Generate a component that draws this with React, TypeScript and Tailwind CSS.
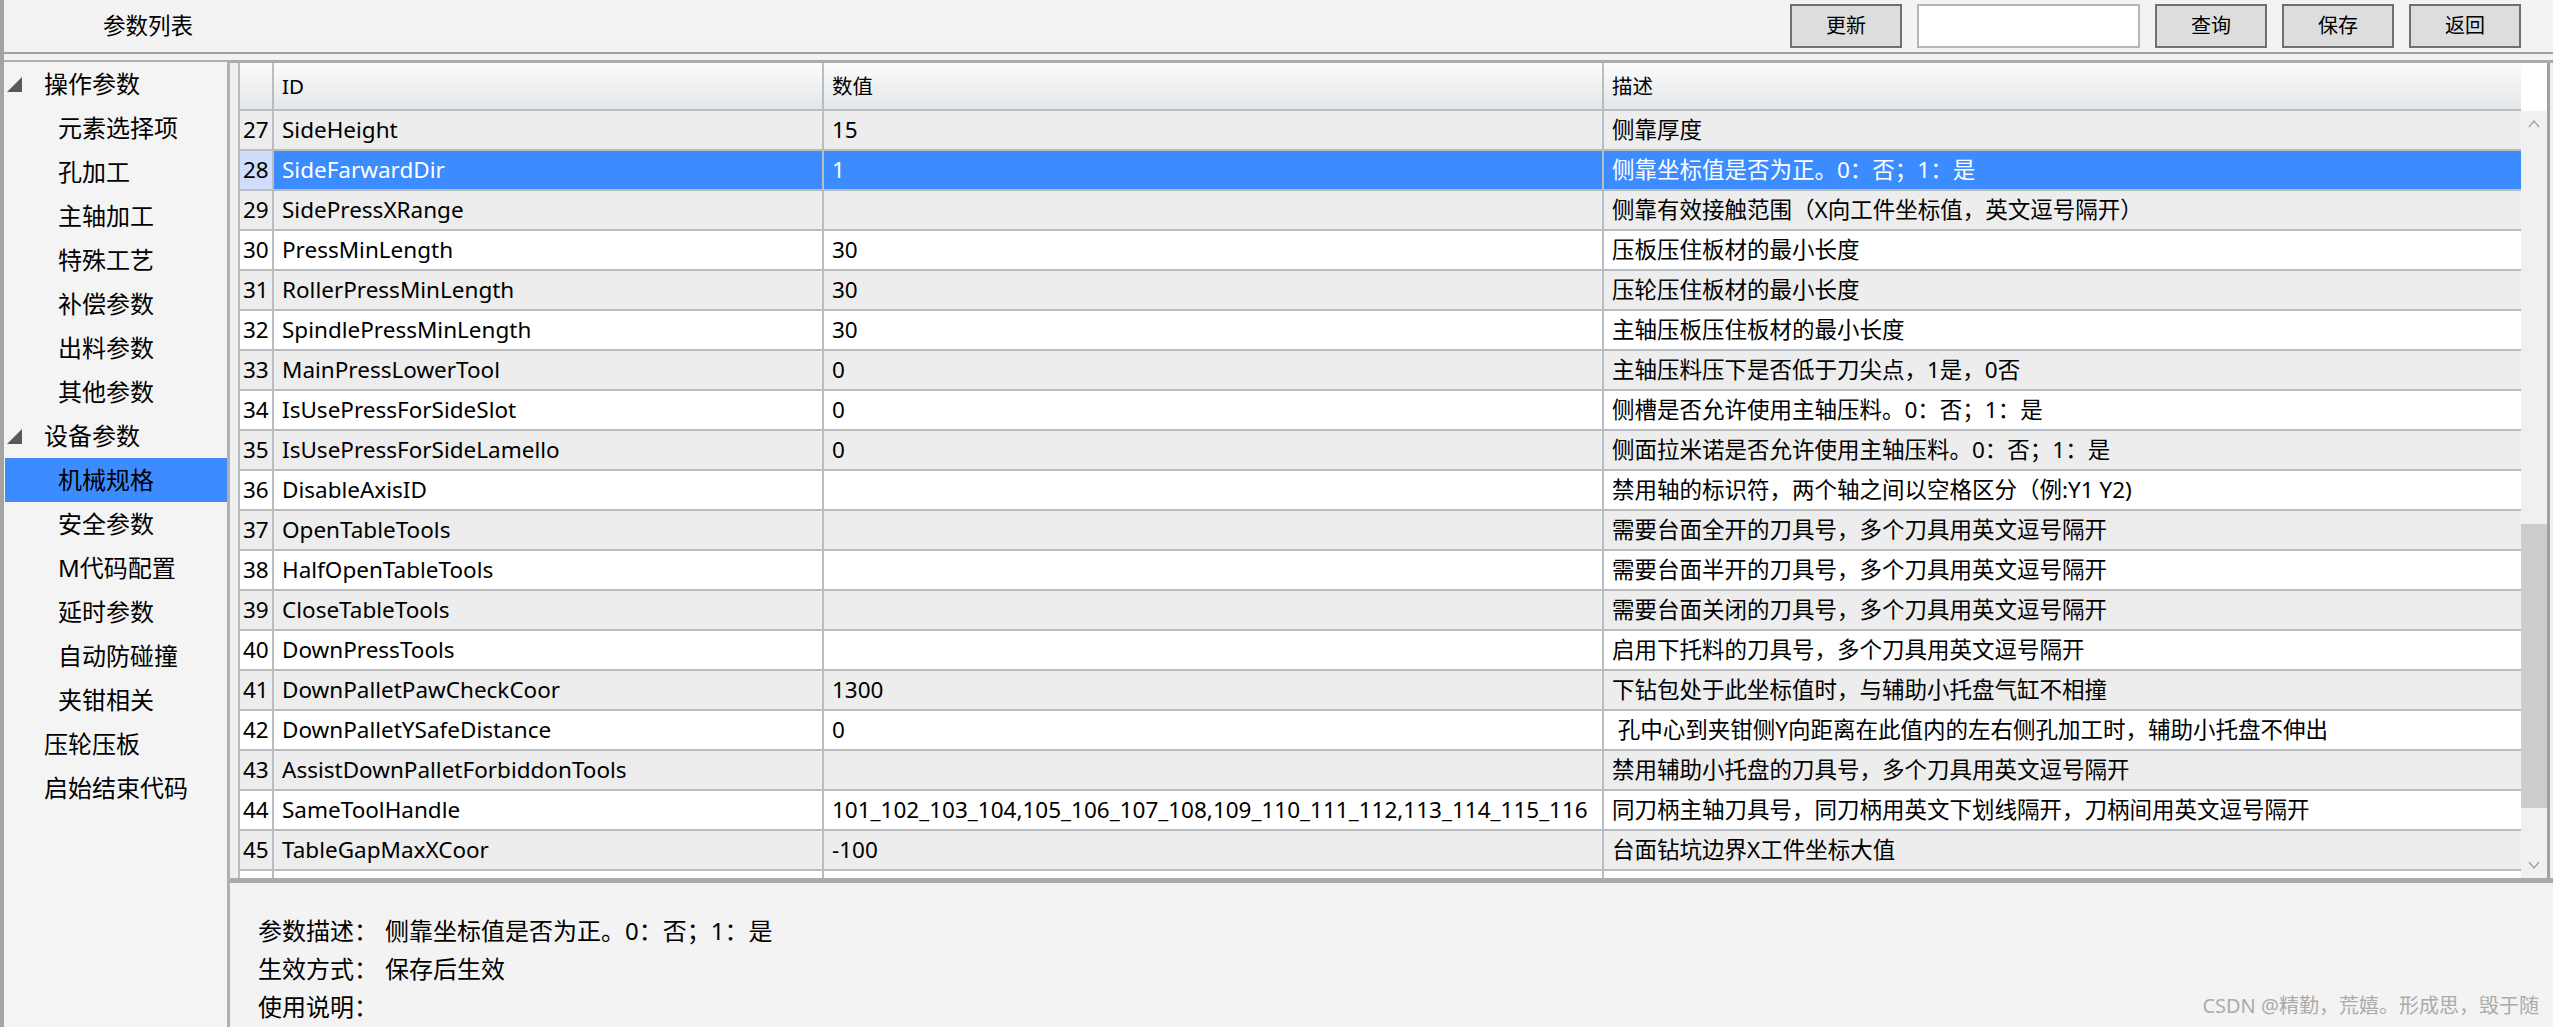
const tree = [
  { label: "操作参数", level: 0, open: true },
  { label: "元素选择项", level: 1 },
  { label: "孔加工", level: 1 },
  { label: "主轴加工", level: 1 },
  { label: "特殊工艺", level: 1 },
  { label: "补偿参数", level: 1 },
  { label: "出料参数", level: 1 },
  { label: "其他参数", level: 1 },
  { label: "设备参数", level: 0, open: true },
  { label: "机械规格", level: 1, selected: true },
  { label: "安全参数", level: 1 },
  { label: "M代码配置", level: 1 },
  { label: "延时参数", level: 1 },
  { label: "自动防碰撞", level: 1 },
  { label: "夹钳相关", level: 1 },
  { label: "压轮压板", level: 0 },
  { label: "启始结束代码", level: 0 },
];

const rows: [number, string, string, string][] = [
  [27, "SideHeight", "15", "侧靠厚度"],
  [28, "SideFarwardDir", "1", "侧靠坐标值是否为正。0：否；1：是"],
  [29, "SidePressXRange", "", "侧靠有效接触范围（X向工件坐标值，英文逗号隔开）"],
  [30, "PressMinLength", "30", "压板压住板材的最小长度"],
  [31, "RollerPressMinLength", "30", "压轮压住板材的最小长度"],
  [32, "SpindlePressMinLength", "30", "主轴压板压住板材的最小长度"],
  [33, "MainPressLowerTool", "0", "主轴压料压下是否低于刀尖点，1是，0否"],
  [34, "IsUsePressForSideSlot", "0", "侧槽是否允许使用主轴压料。0：否；1：是"],
  [35, "IsUsePressForSideLamello", "0", "侧面拉米诺是否允许使用主轴压料。0：否；1：是"],
  [36, "DisableAxisID", "", "禁用轴的标识符，两个轴之间以空格区分（例:Y1 Y2)"],
  [37, "OpenTableTools", "", "需要台面全开的刀具号，多个刀具用英文逗号隔开"],
  [38, "HalfOpenTableTools", "", "需要台面半开的刀具号，多个刀具用英文逗号隔开"],
  [39, "CloseTableTools", "", "需要台面关闭的刀具号，多个刀具用英文逗号隔开"],
  [40, "DownPressTools", "", "启用下托料的刀具号，多个刀具用英文逗号隔开"],
  [41, "DownPalletPawCheckCoor", "1300", "下钻包处于此坐标值时，与辅助小托盘气缸不相撞"],
  [42, "DownPalletYSafeDistance", "0", " 孔中心到夹钳侧Y向距离在此值内的左右侧孔加工时，辅助小托盘不伸出"],
  [43, "AssistDownPalletForbiddonTools", "", "禁用辅助小托盘的刀具号，多个刀具用英文逗号隔开"],
  [44, "SameToolHandle", "101_102_103_104,105_106_107_108,109_110_111_112,113_114_115_116", "同刀柄主轴刀具号，同刀柄用英文下划线隔开，刀柄间用英文逗号隔开"],
  [45, "TableGapMaxXCoor", "-100", "台面钻坑边界X工件坐标大值"],
];

function Btn({ children }: { children: string }) {
  return (
    <button className="w-[112px] h-[44px] bg-[#dddddd] border-2 border-[#707070] text-[20px] text-black">
      {children}
    </button>
  );
}

function Triangle() {
  return (
    <svg width="16" height="16" viewBox="0 0 16 16" className="shrink-0">
      <polygon points="15,1 15,16 0,16" fill="#595959" />
    </svg>
  );
}

function Chevron({ up }: { up?: boolean }) {
  return (
    <svg width="12" height="8" viewBox="0 0 12 8">
      <polyline
        points={up ? "1,7 6,1 11,7" : "1,1 6,7 11,1"}
        fill="none"
        stroke="#a0a0a0"
        strokeWidth="1.3"
      />
    </svg>
  );
}

export default function App() {
  return (
    <div className="w-[2553px] h-[1027px] overflow-hidden flex flex-col bg-[#f3f3f3] border-l-4 border-[#a3a3a3] text-black font-['Noto_Sans','Noto_Sans_CJK_SC',sans-serif]">
      {/* top bar */}
      <div className="h-[54px] shrink-0 flex items-center border-b-2 border-[#9ea2a8] pl-[99px] pr-[32px]">
        <span className="text-[22.5px]">参数列表</span>
        <div className="ml-auto flex items-center gap-[15px]">
          <Btn>更新</Btn>
          <input className="w-[223px] h-[44px] bg-white border-2 border-[#b4b6bb] outline-none" />
          <Btn>查询</Btn>
          <Btn>保存</Btn>
          <Btn>返回</Btn>
        </div>
      </div>

      <div className="flex-1 flex pt-[6px] min-h-0">
        {/* tree */}
        <div className="w-[226px] shrink-0 bg-[#f4f4f4] border-t-2 border-r-[3px] border-[#b0b0b0] text-[24px] pl-[1px]">
          {tree.map((t) => (
            <div
              key={t.label}
              className={
                "h-[44px] w-[222px] flex items-center " +
                (t.selected ? "bg-[#3c8cff]" : "")
              }
            >
              {t.level === 0 ? (
                <>
                  <div className="w-[39px] pl-[2px] flex items-center">
                    {t.open ? <Triangle /> : null}
                  </div>
                  <span>{t.label}</span>
                </>
              ) : (
                <span className="pl-[53px]">{t.label}</span>
              )}
            </div>
          ))}
        </div>

        {/* right side */}
        <div className="flex-1 flex flex-col min-w-0">
          <div className="h-[823px] shrink-0 border-t-[3px] border-b-[5px] border-[#ababab] bg-[#f0f0f0] pl-[8px] pr-[3px]">
            <div className="h-full flex border-l-2 border-r-[3px] border-l-[#b8bcc0] border-r-[#a0a0a0]">
              <div className="w-[2281px] flex flex-col overflow-hidden">
                {/* header */}
                <div className="h-[48px] shrink-0 grid grid-cols-[34px_550px_780px_917px] border-b-2 border-[#b9bcc0] bg-linear-to-b from-[#fcfcfc] to-[#e3e5e8] text-[20.5px]">
                  <div className="border-r-2 border-[#b9bcc0]" />
                  <div className="border-r-2 border-[#b9bcc0] pl-[8px] flex items-center">ID</div>
                  <div className="border-r-2 border-[#b9bcc0] pl-[8px] flex items-center">数值</div>
                  <div className="pl-[8px] flex items-center">描述</div>
                </div>
                {rows.map(([n, id, val, desc]) => {
                  const sel = n === 28;
                  const bg = sel ? "bg-[#3c8cff] text-white" : n % 2 ? "bg-[#ededed]" : "bg-white";
                  return (
                    <div
                      key={n}
                      className="h-[40px] shrink-0 grid grid-cols-[34px_550px_780px_917px] border-b-2 border-[#b9bcc0] text-[22.5px]"
                    >
                      <div
                        className={
                          "border-r-2 border-[#b9bcc0] pl-[3px] flex items-center overflow-hidden " +
                          (sel ? "bg-[#cfdcfa]" : n % 2 ? "bg-[#ededed]" : "bg-white")
                        }
                      >
                        {n}
                      </div>
                      <div className={"border-r-2 border-[#b9bcc0] pl-[8px] flex items-center overflow-hidden whitespace-nowrap " + bg}>
                        {id}
                      </div>
                      <div className={"border-r-2 border-[#b9bcc0] pl-[8px] flex items-center overflow-hidden whitespace-nowrap " + bg}>
                        {val}
                      </div>
                      <div className={"pl-[8px] flex items-center overflow-hidden whitespace-pre " + bg}>
                        {desc}
                      </div>
                    </div>
                  );
                })}
                <div className="flex-1 grid grid-cols-[34px_550px_780px_917px] bg-white">
                  <div className="border-r-2 border-[#b9bcc0]" />
                  <div className="border-r-2 border-[#b9bcc0]" />
                  <div className="border-r-2 border-[#b9bcc0]" />
                  <div />
                </div>
              </div>

              {/* scrollbar */}
              <div className="w-[26px] shrink-0 flex flex-col">
                <div className="h-[48px] shrink-0 bg-white" />
                <div className="flex-1 bg-[#f0f0f0] flex flex-col items-center">
                  <div className="h-[26px] flex items-center justify-center">
                    <Chevron up />
                  </div>
                  <div className="h-[387px]" />
                  <div className="w-full h-[284px] bg-[#cdcdcd]" />
                  <div className="flex-1" />
                  <div className="h-[26px] flex items-center justify-center">
                    <Chevron />
                  </div>
                </div>
              </div>
            </div>
          </div>

          {/* bottom info */}
          <div className="flex-1 relative pl-[28px] pt-[29px] text-[24px] leading-[38px]">
            <div className="flex">
              <span className="w-[127px]">参数描述：</span>
              <span>侧靠坐标值是否为正。0：否；1：是</span>
            </div>
            <div className="flex">
              <span className="w-[127px]">生效方式：</span>
              <span>保存后生效</span>
            </div>
            <div className="flex">
              <span className="w-[127px]">使用说明：</span>
            </div>
            <div className="absolute right-[14px] bottom-[8px] text-[20px] leading-[26px] text-[#ababab]">
              CSDN @精勤，荒嬉。形成思，毁于随
            </div>
          </div>
        </div>
      </div>
    </div>
  );
}
